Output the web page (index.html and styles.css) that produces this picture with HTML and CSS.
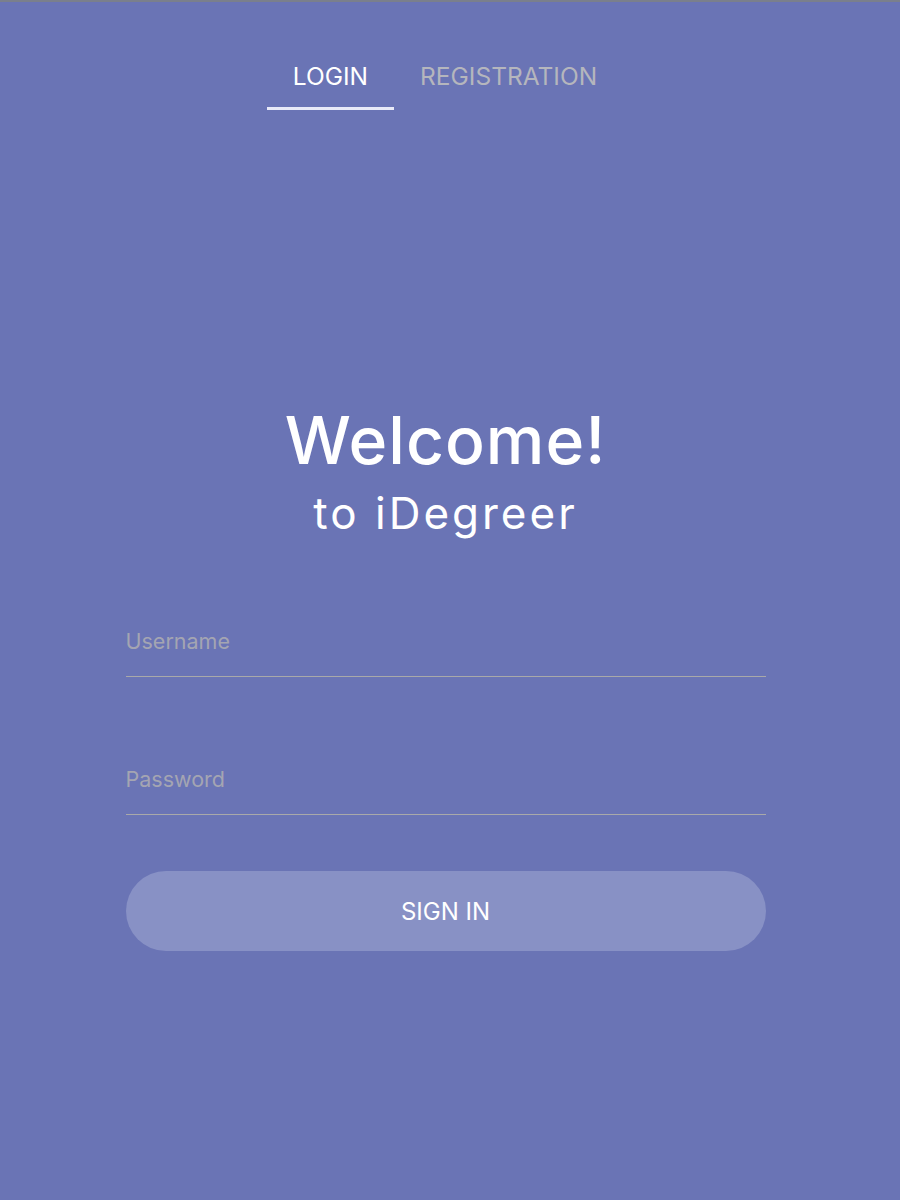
FILE: index.html
```html
<!DOCTYPE html>
<html>
<head>
<meta charset="utf-8">
<link rel="stylesheet" href="styles.css">
</head>
<body>
<div class="topline"></div>
<main class="page">
  <nav class="tabs">
    <div class="tab active">LOGIN</div>
    <div class="tab">REGISTRATION</div>
  </nav>
  <section class="hero">
    <h1 class="title">Welcome!</h1>
    <p class="subtitle">to iDegreer</p>
  </section>
  <form class="form">
    <label class="field"><input class="input" type="text" placeholder="Username"></label>
    <label class="field"><input class="input" type="password" placeholder="Password"></label>
    <button class="btn" type="button">SIGN IN</button>
  </form>
</main>
</body>
</html>
```
FILE: styles.css
```css
html, body {
  margin: 0;
  padding: 0;
  background: #6a74b5;
  height: 1200px;
  font-family: Inter, "Noto Sans", sans-serif;
}
.topline {
  height: 2px;
  background: #7a7f8c;
}
.page {
  display: flex;
  flex-direction: column;
  align-items: center;
  padding-right: 9px;
}
.tabs {
  display: flex;
  margin-top: 57px;
  margin-right: 1px;
}
.tab {
  font-size: 24.5px;
  color: #b5b6bd;
  padding: 0 26px;
  height: 51px;
  line-height: 34px;
  box-sizing: border-box;
}
.tab.active {
  color: #ffffff;
  border-bottom: 3px solid #e8eaf8;
}
.hero {
  margin-top: 290px;
  text-align: center;
  color: #fff;
}
.title {
  margin: 0;
  font-size: 66px;
  font-weight: 500;
  line-height: 80px;
  letter-spacing: 1px;
}
.subtitle {
  margin: 0;
  font-size: 44px;
  line-height: 60px;
  letter-spacing: 3px;
  margin-top: 3px;
}
.form {
  width: 640px;
  margin-top: 86px;
  display: flex;
  flex-direction: column;
}
.field {
  display: block;
  border-bottom: 1px solid #a9a9a9;
  margin-bottom: 90px;
}
.field:nth-child(2) {
  margin-bottom: 56px;
}
.input {
  display: block;
  width: 100%;
  box-sizing: border-box;
  background: transparent;
  border: 0;
  outline: none;
  padding: 0 0 23px 0;
  font-family: Inter, "Noto Sans", sans-serif;
  font-size: 21.5px;
  line-height: 24px;
  color: #fff;
}
.input::placeholder {
  color: #a4a5b2;
}
.btn {
  height: 80px;
  border-radius: 40px;
  border: 0;
  background: #8891c5;
  color: #fff;
  font-family: Inter, "Noto Sans", sans-serif;
  font-size: 24px;
}
```
